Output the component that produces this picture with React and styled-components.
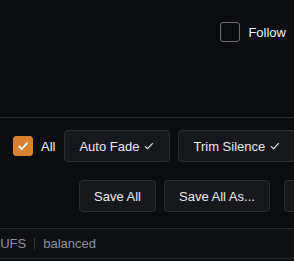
import React, { useState } from "react";
import styled, { createGlobalStyle } from "styled-components";

const GlobalStyle = createGlobalStyle`
    html, body {
        margin: 0;
        padding: 0;
        background: #0c0d10;
        overflow: hidden;
    }
    body {
        font-family: "Liberation Sans", Arial, sans-serif;
        color: #e6e7ea;
    }
`;

const Check = () => (
    <svg width="12" height="12" viewBox="0 0 12 12" fill="none">
        <path d="M2.3 6.6 L4.6 8.7 L9.4 3.6" stroke="currentColor" strokeWidth="1.2" strokeLinecap="round" strokeLinejoin="round" />
    </svg>
);

const BoxCheck = () => (
    <svg width="14" height="14" viewBox="0 0 14 14" fill="none">
        <path d="M3 7.4 L5.8 10 L11 4.2" stroke="currentColor" strokeWidth="1.8" strokeLinecap="round" strokeLinejoin="round" />
    </svg>
);

export default function App() {
    const [follow, setFollow] = useState(false);
    const [all, setAll] = useState(true);

    return (
        <Page>
            <GlobalStyle />
            <TopBar>
                <Toggle onClick={() => setFollow(!follow)}>
                    <Box checked={follow}>{follow && <BoxCheck />}</Box>
                    <span>Follow</span>
                </Toggle>
            </TopBar>
            <Options>
                <OptionRow>
                    <Toggle onClick={() => setAll(!all)}>
                        <Box checked={all}>{all && <BoxCheck />}</Box>
                        <span>All</span>
                    </Toggle>
                    <Button>Auto Fade <Check /></Button>
                    <Button>Trim Silence <Check /></Button>
                </OptionRow>
                <SaveRow>
                    <Group>
                        <Button>Save All</Button>
                        <Button>Save All As...</Button>
                    </Group>
                    <Button aria-label="Close" />
                </SaveRow>
            </Options>
            <StatusBar>
                <StatusItem>LUFS</StatusItem>
                <Divider />
                <StatusItem>balanced</StatusItem>
            </StatusBar>
        </Page>
    );
}

const Page = styled.div`
    width: 294px;
    height: 261px;
    overflow: hidden;
    display: flex;
    flex-direction: column;
`;

const TopBar = styled.div`
    height: 118px;
    flex-shrink: 0;
    display: flex;
    justify-content: flex-end;
    align-items: flex-start;
    padding: 22px 8px 0 0;
    box-sizing: border-box;
    border-bottom: 1px solid #26272c;
`;

const Toggle = styled.label`
    display: flex;
    align-items: center;
    gap: 8px;
    font-size: 13px;
    color: #f2f3f5;
    cursor: pointer;
    white-space: nowrap;
`;

const Box = styled.span`
    width: 20px;
    height: 20px;
    box-sizing: border-box;
    border-radius: 3px;
    display: flex;
    align-items: center;
    justify-content: center;
    color: #fff;
    background: ${p => (p.checked ? "#d8822f" : "transparent")};
    border: 1px solid ${p => (p.checked ? "#d8822f" : "#707075")};
`;

const Options = styled.div`
    flex-shrink: 0;
    display: flex;
    flex-direction: column;
    gap: 18px;
    padding: 12px 0 16px 13px;
    border-bottom: 1px solid #26272c;
`;

const OptionRow = styled.div`
    display: flex;
    align-items: center;
    gap: 8px;
    & > label {
        margin-right: 1px;
    }
`;

const SaveRow = styled.div`
    display: flex;
    gap: 14px;
    padding-left: 66px;
`;

const Group = styled.div`
    display: flex;
    gap: 8px;
`;

const Button = styled.button`
    flex-shrink: 0;
    height: 32px;
    min-width: 60px;
    padding: 0 14px;
    display: flex;
    align-items: center;
    gap: 4px;
    background: #17181c;
    border: 1px solid #2c2d33;
    border-radius: 4px;
    color: #e8e9ec;
    font-family: "Liberation Sans", Arial, sans-serif;
    font-size: 13px;
    white-space: nowrap;
    cursor: pointer;
`;

const StatusBar = styled.div`
    height: 29px;
    flex-shrink: 0;
    display: flex;
    align-items: center;
    gap: 8px;
    background: #0f1013;
    border-bottom: 1px solid #26272c;
    margin-left: -7px;
`;

const StatusItem = styled.span`
    font-size: 13px;
    color: #8d919a;
`;

const Divider = styled.span`
    width: 1px;
    height: 11px;
    background: #3a3b41;
`;
